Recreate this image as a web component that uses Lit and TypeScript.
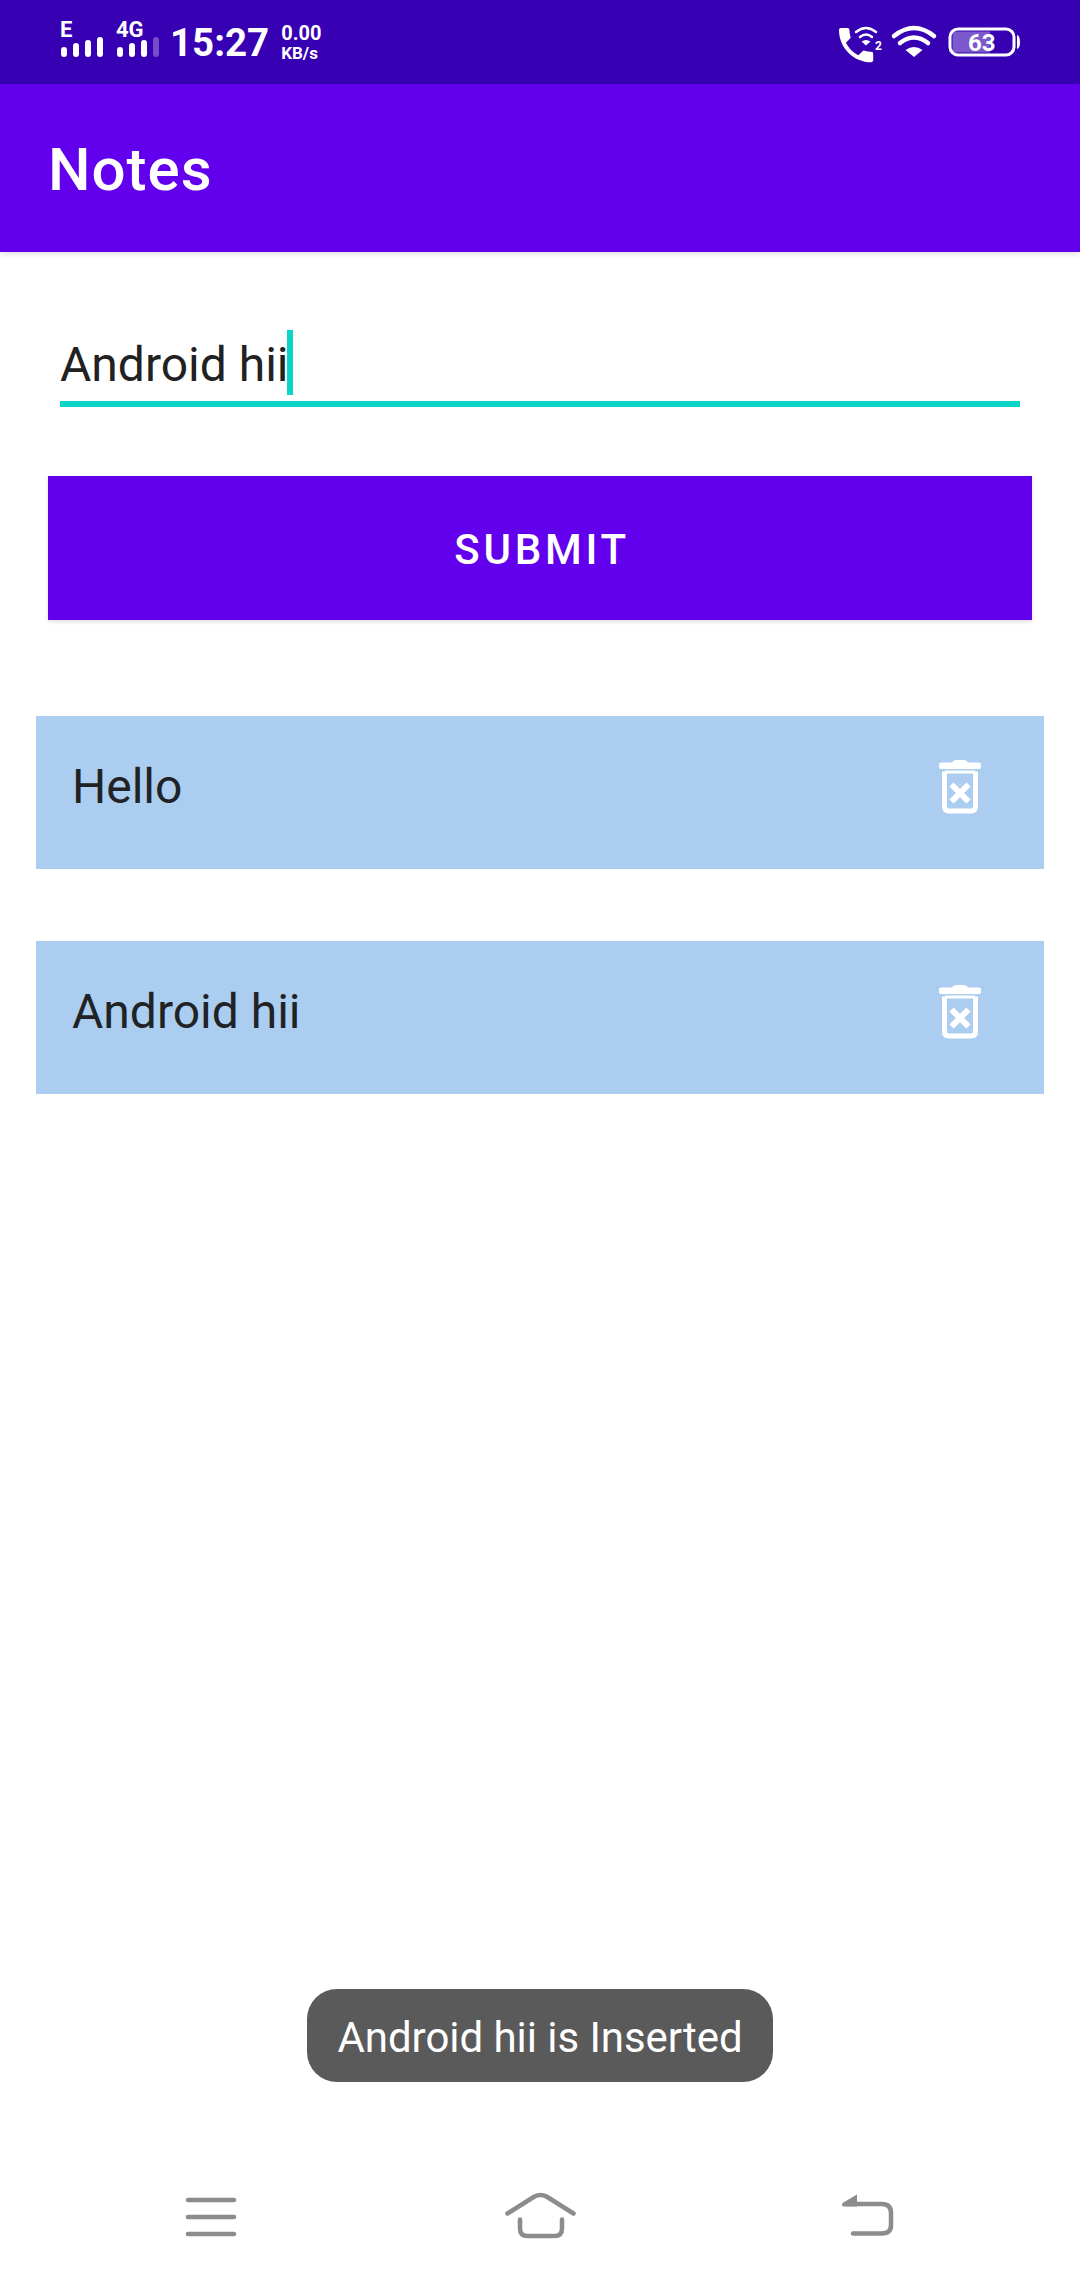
import { css, html, svg, LitElement } from "lit";
import { customElement } from "lit/decorators.js";

const notes = ["Hello", "Android hii"];

const trash = html`
  <svg class="trash" viewBox="936 756 48 60" width="48" height="60">
    <path d="M952 761.500q1-2.500 4-2.500h8q3 0 4 2.500h11q2 0 2 2v3q0 1.500-2 1.500h-38q-2 0-2-1.500v-3q0-2 2-2z" fill="#fff" />
    <path d="M944.500 770.500v35q0 4.500 4.500 4.500h22q4.500 0 4.500-4.500v-35" fill="none" stroke="#fff" stroke-width="5" />
    <path d="M945 771h30" stroke="#fff" stroke-width="3" />
    <path d="M951.500 783.500l17 17M968.500 783.500l-17 17" stroke="#fff" stroke-width="6" fill="none" />
  </svg>
`;

const signal = (label: string, bars: number[], dim: number[] = []) => html`
  <div class="signal">
    <span class="net">${label}</span>
    <div class="bars">
      ${bars.map(
        (h, i) =>
          html`<i class="${dim.includes(i) ? "bar dim" : "bar"}" style="height:${h}px"></i>`
      )}
    </div>
  </div>
`;

const statusRight = svg`
  <path transform="translate(833.300 22.300) scale(1.900)" fill="#fff"
    d="M6.620 10.790c1.440 2.830 3.760 5.140 6.590 6.590l2.200-2.200c.27-.27.67-.36 1.020-.24 1.120.37 2.330.57 3.570.57.55 0 1 .45 1 1V20c0 .55-.45 1-1 1-9.390 0-17-7.610-17-17 0-.55.45-1 1-1h3.500c.55 0 1 .45 1 1 0 1.250.2 2.450.57 3.570.11.35.03.74-.25 1.020l-2.200 2.200z" />
  <g fill="none" stroke="#fff" stroke-linecap="round">
    <path d="M856 32q10-8 20 0" stroke-width="2.500" />
    <path d="M860 37q6-5 12 0" stroke-width="2.500" />
    <path d="M894 36q20-16 40 0" stroke-width="4.500" />
    <path d="M900 43q14-11 28 0" stroke-width="4.500" />
  </g>
  <path d="M861.500 41.500q4.500-3 9 0l-4.500 4z" fill="#fff" />
  <path d="M905.500 50q8.500-6 17 0l-8.500 7z" fill="#fff" />
  <text x="875" y="50" class="sim">2</text>
`;

@customElement("app-root")
export default class AppRoot extends LitElement {
  static styles = css`
    :host {
      display: block;
      position: relative;
      width: 1080px;
      height: 2280px;
      overflow: hidden;
      background: #fff;
      font-family: Roboto, "Liberation Sans", sans-serif;
    }

    .page {
      display: flex;
      flex-direction: column;
      height: 100%;
    }

    .status {
      display: flex;
      align-items: flex-start;
      height: 84px;
      padding: 0 60px;
      background: #3700b3;
      color: #fff;
    }

    .signal {
      display: flex;
      flex-direction: column;
      align-items: flex-start;
      height: 57px;
      margin-right: 13px;
    }

    .net {
      height: 14px;
      margin-top: 20px;
      font-size: 22px;
      line-height: 20px;
      font-weight: 700;
    }

    .bars {
      display: flex;
      align-items: flex-end;
      gap: 6px;
      margin-top: auto;
      margin-left: 1px;
    }

    .bar {
      width: 6px;
      border-radius: 3px;
      background: #fff;
    }

    .bar.dim {
      opacity: 0.3;
    }

    .time {
      margin-left: -2px;
      margin-top: 20px;
      font-size: 38.500px;
      line-height: 46px;
      font-weight: 700;
    }

    .speed {
      display: flex;
      flex-direction: column;
      margin-left: 12px;
      margin-top: 22px;
      font-weight: 700;
    }

    .speed b {
      font-size: 20px;
      line-height: 23px;
      font-weight: 700;
    }

    .speed span {
      font-size: 17px;
      line-height: 17px;
    }

    .right {
      display: block;
      margin-left: auto;
    }

    .sim {
      font-size: 12px;
      font-weight: 700;
      fill: #fff;
    }

    .level {
      font-size: 24px;
      font-weight: 700;
      fill: #fff;
    }

    .appbar {
      display: flex;
      align-items: center;
      height: 166px;
      padding: 2px 0 0 48px;
      background: #6200ee;
      box-shadow: 0 2px 5px rgba(0, 0, 0, 0.12);
      color: #fff;
      font-size: 60px;
      font-weight: 500;
      letter-spacing: 1px;
    }

    .field {
      display: flex;
      align-items: flex-end;
      height: 77px;
      margin: 72px 60px 0;
      border-bottom: 6px solid #0bd5c6;
      color: #212121;
      font-size: 48px;
      line-height: 64px;
    }

    .field span {
      padding-bottom: 4px;
    }

    .caret {
      width: 6px;
      height: 65px;
      margin-bottom: 6px;
      margin-left: -2px;
      background: #0bd5c6;
    }

    .submit {
      display: flex;
      align-items: center;
      justify-content: center;
      height: 142px;
      margin: 69px 48px 0;
      padding: 2px 0 0 4px;
      background: #6200ee;
      box-shadow: 0 2px 4px rgba(0, 0, 0, 0.12);
      color: #fff;
      font-size: 42px;
      font-weight: 500;
      letter-spacing: 3.750px;
    }

    .list {
      display: flex;
      flex-direction: column;
      gap: 72px;
      margin: 96px 36px 0;
    }

    .row {
      display: flex;
      align-items: center;
      justify-content: space-between;
      height: 141px;
      padding: 0 60px 12px 36px;
      background: #abcdef;
      color: #202226;
      font-size: 48px;
    }

    .trash {
      display: block;
    }

    .spacer {
      flex: 1;
    }

    .nav {
      display: flex;
      justify-content: space-between;
      height: 90px;
      padding: 0 185px 0 183px;
    }

    .nav path {
      fill: none;
      stroke: #8c8c8c;
      stroke-width: 4.500;
      stroke-linecap: round;
      stroke-linejoin: round;
    }

    .nav path.solid {
      fill: #8c8c8c;
      stroke: none;
    }

    .toast-wrap {
      position: absolute;
      left: 0;
      right: 0;
      bottom: 198px;
      display: flex;
      justify-content: center;
    }

    .toast {
      display: flex;
      align-items: center;
      height: 90px;
      padding: 3px 30px 0;
      border-radius: 30px;
      background: #5a5a5a;
      color: #fff;
      font-size: 42px;
      letter-spacing: -0.05px;
    }
  `;

  render() {
    return html`
      <div class="page">
        <div class="status">
          ${signal("E", [10, 14, 17, 20])}
          ${signal("4G", [10, 14, 17, 20], [3])}
          <span class="time">15:27</span>
          <div class="speed"><b>0.00</b><span>KB/s</span></div>
          <svg class="right" viewBox="830 0 190 84" width="190" height="84">
            ${statusRight}
            <rect x="950" y="29" width="64" height="26" rx="8" fill="none" stroke="#fff" stroke-width="3" />
            <path d="M952.500 35q0-3.500 3.500-3.500h34v21h-34q-3.500 0-3.500-3.500z" fill="#fff" opacity="0.35" />
            <path d="M1017 35q3 1 3 7t-3 7z" fill="#fff" />
            <text x="968" y="51" class="level">63</text>
          </svg>
        </div>
        <div class="appbar">Notes</div>
        <div class="field"><span>Android hii</span><i class="caret"></i></div>
        <div class="submit">SUBMIT</div>
        <div class="list">
          ${notes.map((n) => html`<div class="row"><span>${n}</span>${trash}</div>`)}
        </div>
        <div class="spacer"></div>
        <div class="nav">
          <svg viewBox="183 2190 56 60" width="56" height="60">
            <path d="M188 2200h46M188 2217h46M188 2234h46" />
          </svg>
          <svg viewBox="501 2190 76 60" width="76" height="60">
            <path d="M507.500 2213.500l27-17q6-3 12 0l27 17" />
            <path d="M520 2219.500v9q0 7.500 7.500 7.500h27q7.500 0 7.500-7.500v-9" />
          </svg>
          <svg viewBox="839 2190 56 60" width="56" height="60">
            <path d="M846 2204h36q9 0 9 9v12q0 8.500-9 8.500h-29" />
            <path class="solid" d="M842.500 2203l14.500-8.500v12h-13q-3 0-1.500-3.500z" />
          </svg>
        </div>
      </div>
      <div class="toast-wrap"><div class="toast">Android hii is Inserted</div></div>
    `;
  }
}
